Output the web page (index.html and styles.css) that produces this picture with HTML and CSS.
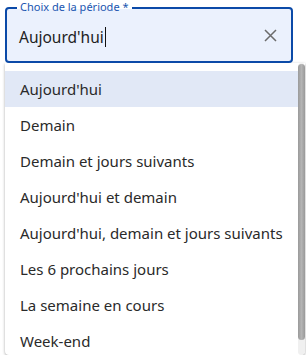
FILE: index.html
```html
<!DOCTYPE html>
<html lang="fr">
<head>
<meta charset="utf-8">
<link rel="stylesheet" href="styles.css">
</head>
<body>
<div class="field">
  <div class="box">
    <span class="label">Choix de la période *</span>
    <div class="value"><span class="text">Aujourd'hui</span><span class="caret"></span></div>
    <svg class="clear" width="13" height="13" viewBox="0 0 13 13"><path d="M1 1L12 12M12 1L1 12" stroke="#6b6b6b" stroke-width="1.5" fill="none"/></svg>
  </div>
  <div class="menu">
    <ul class="list">
      <li class="item active">Aujourd'hui</li>
      <li class="item">Demain</li>
      <li class="item">Demain et jours suivants</li>
      <li class="item">Aujourd'hui et demain</li>
      <li class="item">Aujourd'hui, demain et jours suivants</li>
      <li class="item">Les 6 prochains jours</li>
      <li class="item">La semaine en cours</li>
      <li class="item">Week-end</li>
    </ul>
    <div class="scrollbar"><div class="thumb"></div></div>
  </div>
</div>
</body>
</html>
```
FILE: styles.css
```css
* { box-sizing: border-box; }
html, body { margin: 0; padding: 0; background: #fff; }
body { font-family: "Noto Sans", "Open Sans", sans-serif; color: #222; }
.field { padding: 7px 0 0 5px; width: 306px; }
.box {
  width: 288px;
  height: 56px;
  border: 2px solid #0b4aa8;
  border-radius: 4px;
  background: #ebf1fd;
  padding: 0 12px 0 12px;
  display: flex;
  align-items: center;
  position: relative;
}
.label {
  position: absolute;
  left: 10px;
  top: -9px;
  font-size: 11px;
  line-height: 14px;
  color: #1a56b0;
  padding: 0 3px;
  background: linear-gradient(#fff 9px, #ebf1fd 9px);
}
.value {
  flex: 1;
  display: flex;
  align-items: center;
  font-size: 15.5px;
  color: #222;
  margin-top: 3px;
}
.caret { width: 1px; height: 20px; background: #111; margin-left: 1px; }
.clear { margin-right: 2px; margin-top: 1px; }
.menu {
  margin-top: 0;
  width: 300px;
  height: 292px;
  background: #fff;
  border-radius: 0 0 4px 4px;
  box-shadow: 0 1px 3px rgba(0,0,0,0.35);
  display: flex;
  overflow: hidden;
}
.list { list-style: none; margin: 0; padding: 8px 0 0 0; flex: 1; }
.item {
  height: 36px;
  display: flex;
  align-items: center;
  padding-left: 15px;
  font-size: 15px;
  color: #2a2a2a;
}
.item.active { background: #e1e8f6; }
.scrollbar { width: 7px; padding: 1px 0; display: flex; flex-direction: column; background: #f0f0f0; border-radius: 4px; }
.thumb { height: 276px; background: linear-gradient(90deg, #9a9a9a, #b4b4b4 50%, #999); border-radius: 4px; }
```
